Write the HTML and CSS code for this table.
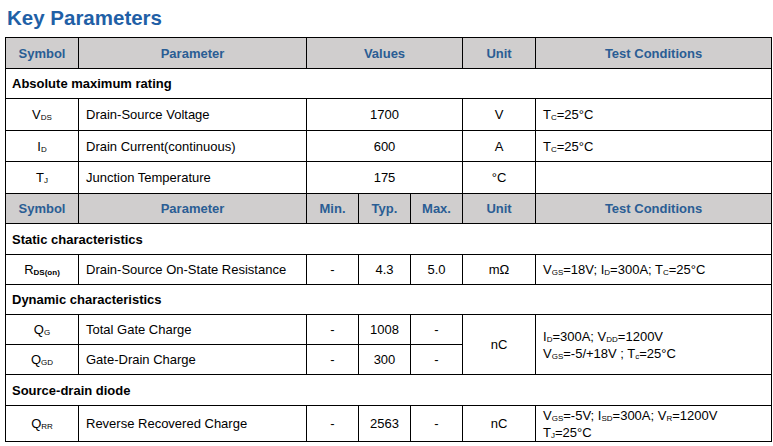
FILE: index.html
```html
<!DOCTYPE html>
<html>
<head>
<meta charset="utf-8">
<link rel="stylesheet" href="styles.css">
</head>
<body>
<h1 class="title">Key Parameters</h1>
<table class="params">
  <colgroup>
    <col class="c-sym"><col class="c-par"><col class="c-v"><col class="c-v"><col class="c-v"><col class="c-unit"><col class="c-test">
  </colgroup>
  <tr class="head r31">
    <th>Symbol</th><th>Parameter</th><th colspan="3">Values</th><th>Unit</th><th>Test Conditions</th>
  </tr>
  <tr class="section r30"><td colspan="7">Absolute maximum rating</td></tr>
  <tr class="r32">
    <td class="sym">V<sub>DS</sub></td><td class="par">Drain-Source Voltage</td><td colspan="3">1700</td><td>V</td><td class="test">T<sub>C</sub>=25°C</td>
  </tr>
  <tr class="r31">
    <td class="sym">I<sub>D</sub></td><td class="par">Drain Current(continuous)</td><td colspan="3">600</td><td>A</td><td class="test">T<sub>C</sub>=25°C</td>
  </tr>
  <tr class="r32">
    <td class="sym">T<sub>J</sub></td><td class="par">Junction Temperature</td><td colspan="3">175</td><td>°C</td><td class="test"></td>
  </tr>
  <tr class="head r30">
    <th>Symbol</th><th>Parameter</th><th>Min.</th><th>Typ.</th><th>Max.</th><th>Unit</th><th>Test Conditions</th>
  </tr>
  <tr class="section r31"><td colspan="7">Static characteristics</td></tr>
  <tr class="r30">
    <td class="sym">R<sub class="b">DS(on)</sub></td><td class="par">Drain-Source On-State Resistance</td><td>-</td><td>4.3</td><td>5.0</td><td>mΩ</td><td class="test">V<sub>GS</sub>=18V; I<sub>D</sub>=300A; T<sub>C</sub>=25°C</td>
  </tr>
  <tr class="section r30"><td colspan="7">Dynamic characteristics</td></tr>
  <tr class="r30">
    <td class="sym">Q<sub>G</sub></td><td class="par">Total Gate Charge</td><td>-</td><td>1008</td><td>-</td><td rowspan="2">nC</td><td class="test two" rowspan="2">I<sub>D</sub>=300A; V<sub>DD</sub>=1200V<br>V<sub>GS</sub>=-5/+18V ; T<sub>c</sub>=25°C</td>
  </tr>
  <tr class="r30">
    <td class="sym">Q<sub>GD</sub></td><td class="par">Gate-Drain Charge</td><td>-</td><td>300</td><td>-</td>
  </tr>
  <tr class="section r31"><td colspan="7">Source-drain diode</td></tr>
  <tr class="r36">
    <td class="sym">Q<sub>RR</sub></td><td class="par">Reverse Recovered Charge</td><td>-</td><td>2563</td><td>-</td><td>nC</td><td class="test two">V<sub>GS</sub>=-5V; I<sub>SD</sub>=300A; V<sub>R</sub>=1200V<br>T<sub>J</sub>=25°C</td>
  </tr>
</table>
</body>
</html>
```
FILE: styles.css
```css
html, body {
  margin: 0;
  padding: 0;
  background: #ffffff;
}
body {
  font-family: "Liberation Sans", Arial, sans-serif;
  color: #000;
  padding-left: 5px;
}
.title {
  margin: 6px 0 7px 2px;
  font-size: 20.5px;
  line-height: 24px;
  font-weight: bold;
  color: #1f60a6;
}
.params {
  border-collapse: collapse;
  table-layout: fixed;
  width: 766px;
  font-size: 13px;
}
.c-sym { width: 73px; }
.c-par { width: 228px; }
.c-v { width: 52px; }
.c-unit { width: 73px; }
.c-test { width: 236px; }
.params th, .params td {
  border: 1px solid #000;
  padding: 1px 0 0 0;
  text-align: center;
  vertical-align: middle;
  line-height: 16px;
  white-space: nowrap;
}
.params th {
  background: #d0cece;
  color: #2a5d94;
  font-weight: bold;
}
.params .section td {
  text-align: left;
  font-weight: bold;
  padding-left: 6px;
}
.params td.par, .params td.test {
  text-align: left;
  padding-left: 7px;
}
.params td.two {
  line-height: 17px;
  padding-top: 1px;
}
sub {
  font-size: 8px;
  vertical-align: -1px;
  line-height: 0;
}
sub.b { font-weight: bold; }
.r30 { height: 30px; }
.r31 { height: 31px; }
.r32 { height: 32px; }
.r36 { height: 36px; }
```
